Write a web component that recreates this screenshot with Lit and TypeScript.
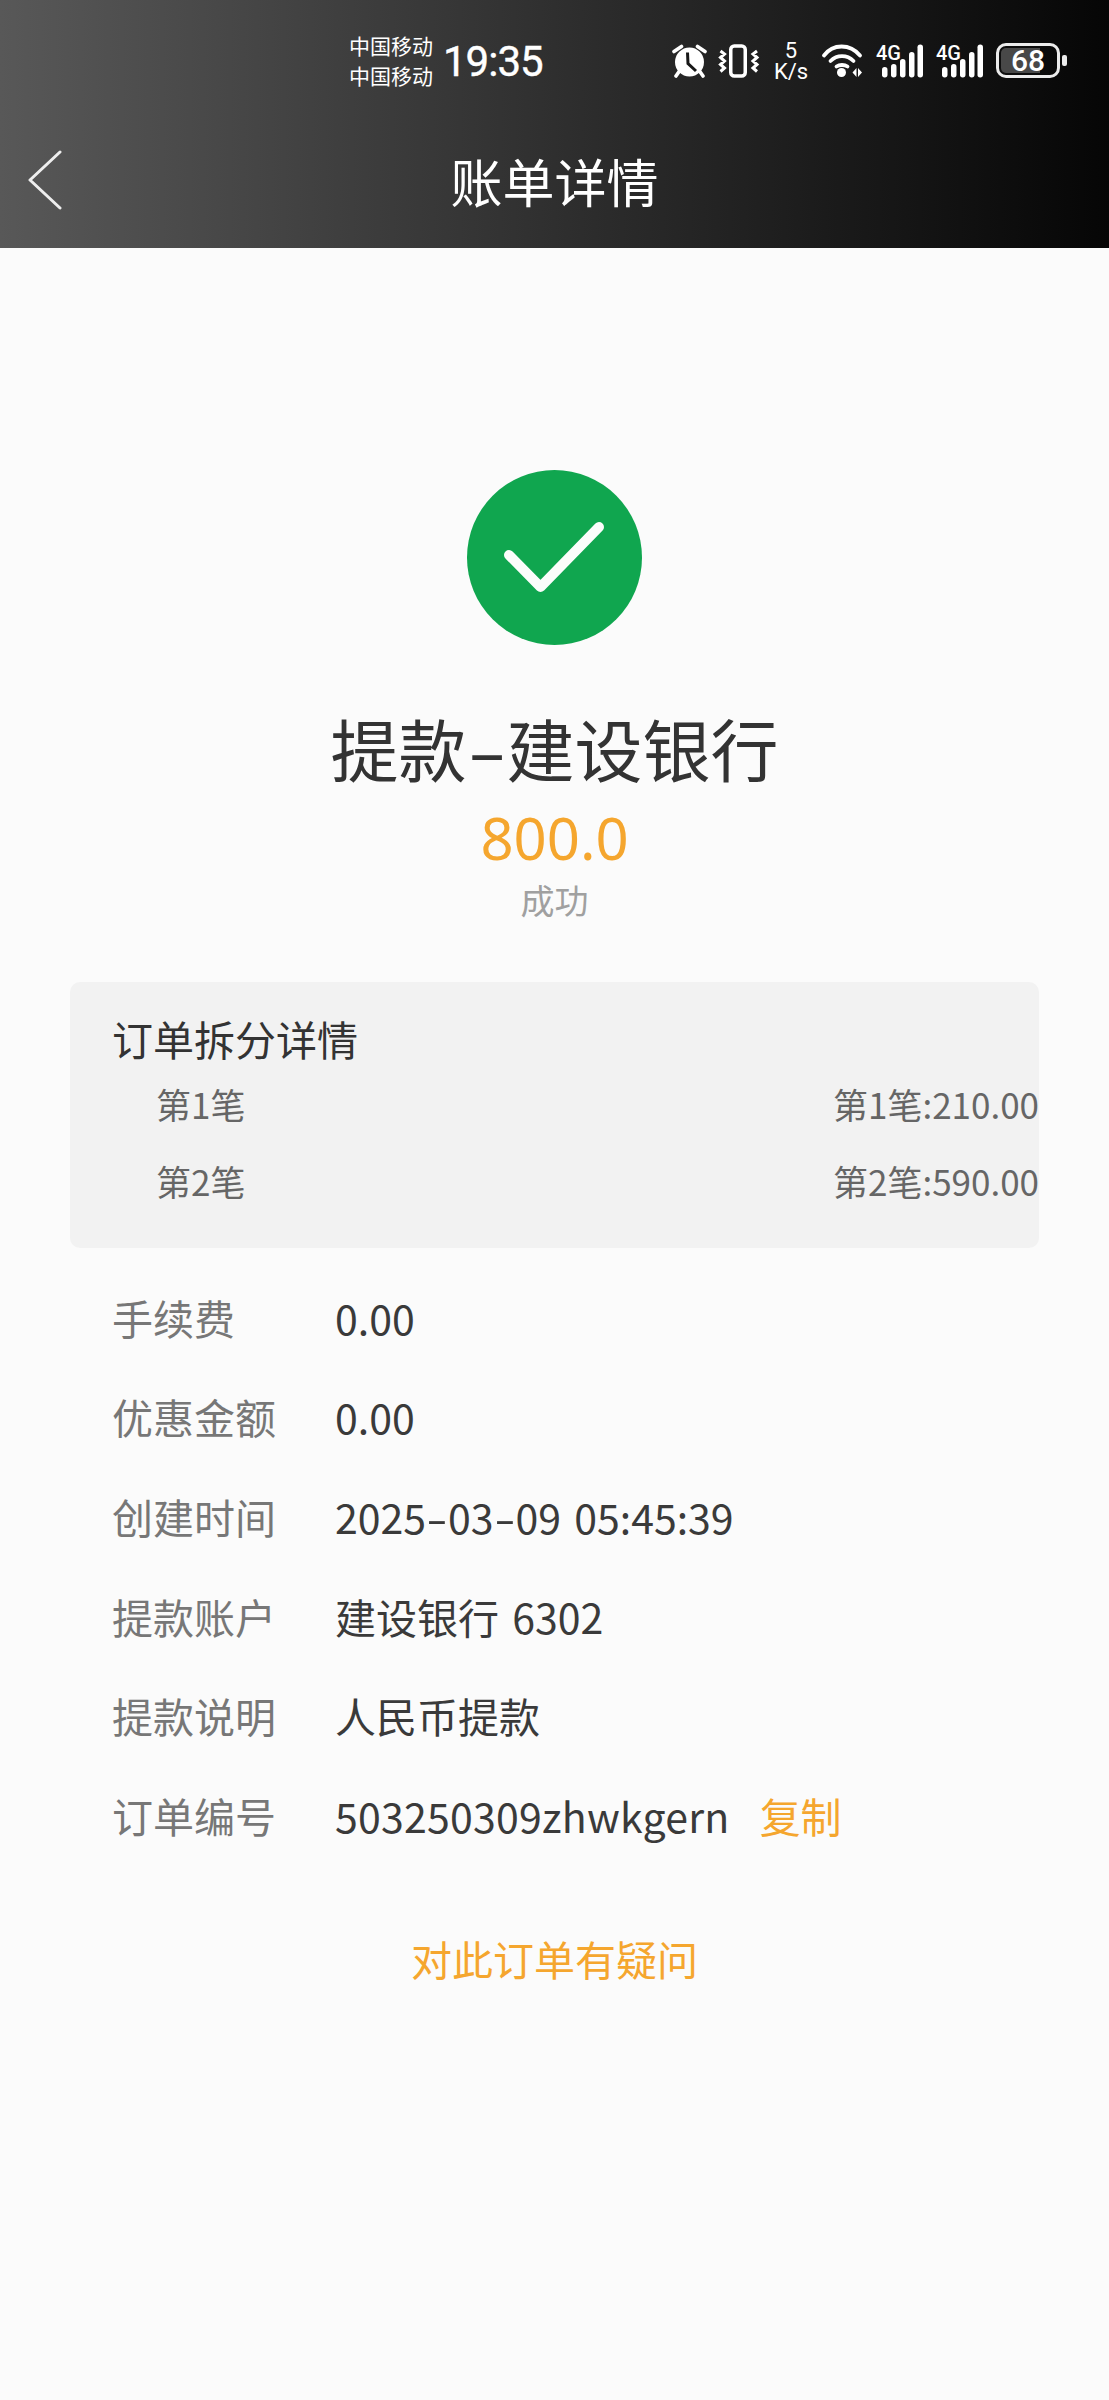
import { LitElement, css, html, svg } from "lit";
import { customElement } from "lit/decorators.js";

const signalBars = svg`<svg width="47" height="34" viewBox="0 0 47 34">
  <g fill="#fff">
    <rect x="6" y="23" width="5.500" height="10.500" rx="2.700"/>
    <rect x="15" y="20" width="5.500" height="13.500" rx="2.700"/>
    <rect x="24" y="15" width="5.500" height="18.500" rx="2.700"/>
    <rect x="33" y="8" width="5.500" height="25.500" rx="2.700"/>
    <rect x="41.500" y="0.500" width="5.500" height="33" rx="2.700"/>
  </g>
</svg>`;

const alarmIcon = svg`<svg width="35" height="34" viewBox="0 0 35 34">
  <circle cx="17.500" cy="18" r="14.500" fill="#fff"/>
  <path d="M9.500 2.500 2 7.500M25.500 2.500l7.500 5" stroke="#fff" stroke-width="3.600" stroke-linecap="round" fill="none"/>
  <path d="M7.500 27l-3.500 5M27.500 27l3.500 5" stroke="#fff" stroke-width="3.600" stroke-linecap="round" fill="none"/>
  <path d="M15.500 8.500l.500 11 8 7.500" stroke="#171717" stroke-width="3" fill="none"/>
</svg>`;

const vibrateIcon = svg`<svg width="42" height="34" viewBox="0 0 42 34">
  <rect x="12.750" y="2" width="14.500" height="30" rx="3.500" fill="none" stroke="#fff" stroke-width="3.500"/>
  <path d="M2.500 7l4 3-4 3.500 4 3.500-4 3.500 4 3.500-4 3.500M39 7l-4 3 4 3.500-4 3.500 4 3.500-4 3.500 4 3.500" fill="none" stroke="#fff" stroke-width="3"/>
</svg>`;

const wifiIcon = svg`<svg width="42" height="34" viewBox="0 0 42 34">
  <g fill="none" stroke="#fff" stroke-width="3.800" stroke-linecap="round">
    <path d="M3 11.500C12 -0.500 29 -0.500 39 11.500"/>
    <path d="M9.500 17C16 10.500 26 10.500 32.500 17"/>
    <path d="M15.500 22.500C18.500 20.500 23.500 20.500 26.500 22.500"/>
  </g>
  <circle cx="20.500" cy="28.500" r="4.500" fill="#fff"/>
  <path d="M31.500 28.500l4-4.500v9zM37 24l4 4.500-4 4.500z" fill="#fff"/>
</svg>`;

// hyphens in this app's font run longer than the CJK font's own glyph
const withDashes = (text: string) =>
  text.split("-").map((part, i) => (i ? html`<span class="dash">-</span>${part}` : part));

@customElement("app-root")
export class AppRoot extends LitElement {
  static styles = css`
    :host {
      display: block;
      min-height: 2400px;
      background: #fbfbfb;
      font-family: "Noto Sans CJK SC", "Noto Sans", sans-serif;
      color: #333;
    }

    .top {
      height: 248px;
      background: linear-gradient(90deg, #585858, #060606);
      color: #fff;
    }

    .status {
      display: flex;
      align-items: center;
      height: 120px;
      padding: 0 42px 0 349px;
    }

    .carriers {
      display: flex;
      flex-direction: column;
      font-size: 21px;
      line-height: 30px;
    }

    .time {
      font-family: Roboto, sans-serif;
      font-size: 42px;
      letter-spacing: -1px;
      -webkit-text-stroke: 0.4px #fff;
      margin-left: 10px;
      margin-top: 3px;
    }

    .icons {
      display: flex;
      align-items: center;
      margin-left: auto;
      margin-top: 1px;
    }

    .icons svg {
      display: block;
    }

    .speed {
      display: flex;
      flex-direction: column;
      align-items: center;
      width: 34px;
      margin: 0 13px 0 14px;
      font-family: Roboto, sans-serif;
      font-size: 22px;
      line-height: 21px;
    }

    .vibrate {
      margin-left: 11px;
    }

    .cell {
      position: relative;
      margin-left: 13px;
    }

    .cell-type {
      position: absolute;
      left: 0;
      top: 1px;
      font-family: Roboto, sans-serif;
      font-size: 20px;
      font-weight: 500;
      line-height: 16px;
    }

    .battery {
      display: flex;
      align-items: center;
      margin-left: 13px;
    }

    .battery-body {
      width: 64px;
      height: 35px;
      box-sizing: border-box;
      border: 3px solid #ececec;
      border-radius: 10px;
      padding: 2px;
    }

    .battery-level {
      height: 100%;
      border-radius: 5px;
      background: linear-gradient(90deg, #484848 72%, transparent 72%);
      font-family: Roboto, sans-serif;
      font-size: 30px;
      font-weight: 500;
      line-height: 25px;
      text-align: center;
    }

    .battery-nub {
      width: 5px;
      height: 11px;
      margin-left: 2px;
      border-radius: 2px;
      background: #ececec;
    }

    .nav {
      display: flex;
      align-items: center;
      justify-content: center;
      position: relative;
      height: 120px;
      font-size: 52px;
    }

    .back {
      position: absolute;
      left: 27px;
      top: 30px;
    }

    .hero {
      display: flex;
      flex-direction: column;
      align-items: center;
      padding-top: 222px;
    }

    .check {
      display: block;
    }

    .name {
      margin-top: 63px;
      font-size: 68px;
      line-height: 80px;
    }

    .name .dash {
      width: 40px;
      transform: scaleX(1.7);
    }

    .dash {
      display: inline-block;
      width: 22px;
      text-align: center;
      transform: scaleX(1.5);
    }

    .amount {
      margin-top: 15px;
      font-family: "Noto Sans", sans-serif;
      font-size: 58px;
      line-height: 70px;
      color: #f5a62e;
    }

    .state {
      margin-top: 5px;
      font-size: 34px;
      line-height: 44px;
      color: #a0a0a0;
    }

    .split {
      margin: 60px 70px 0 70px;
      padding: 31px 0 29px 42px;
      border-radius: 10px;
      background: #f2f2f2;
    }

    .split-title {
      font-size: 41px;
      line-height: 50px;
      margin-bottom: 2px;
    }

    .split-row {
      display: flex;
      align-items: center;
      justify-content: space-between;
      height: 77px;
      padding-left: 44px;
      font-size: 35px;
      color: #666;
    }

    .details {
      margin-top: 19px;
      padding: 0 70px 0 112px;
    }

    .detail {
      display: flex;
      align-items: center;
      height: 99.600px;
      font-size: 41px;
      color: #3a3a3a;
      word-spacing: 4px;
    }

    .label {
      width: 223px;
      flex: none;
      color: #777;
    }

    .order {
      letter-spacing: 0.25px;
    }

    .copy {
      margin-left: 30px;
      color: #f5a62e;
    }

    .question {
      margin-top: 63px;
      font-size: 41px;
      line-height: 60px;
      text-align: center;
      color: #f5a62e;
    }
  `;

  render() {
    const splits = [
      ["第1笔", "第1笔:210.00"],
      ["第2笔", "第2笔:590.00"],
    ];
    const details = [
      ["手续费", "0.00"],
      ["优惠金额", "0.00"],
      ["创建时间", "2025-03-09 05:45:39"],
      ["提款账户", "建设银行 6302"],
      ["提款说明", "人民币提款"],
    ];
    return html`
      <div class="top">
        <div class="status">
          <div class="carriers"><span>中国移动</span><span>中国移动</span></div>
          <div class="time">19:35</div>
          <div class="icons">
            ${alarmIcon}
            <span class="vibrate">${vibrateIcon}</span>
            <div class="speed"><span>5</span><span>K/s</span></div>
            ${wifiIcon}
            <span class="cell"><span class="cell-type">4G</span>${signalBars}</span>
            <span class="cell"><span class="cell-type">4G</span>${signalBars}</span>
            <div class="battery">
              <div class="battery-body"><div class="battery-level">68</div></div>
              <div class="battery-nub"></div>
            </div>
          </div>
        </div>
        <div class="nav">
          <svg class="back" width="36" height="60" viewBox="0 0 36 60">
            <path d="M33 2 3 30l30 28" fill="none" stroke="#eee" stroke-width="3" stroke-linecap="round" stroke-linejoin="round"/>
          </svg>
          账单详情
        </div>
      </div>

      <div class="hero">
        <svg class="check" width="175" height="175" viewBox="0 0 175 175">
          <circle cx="87.500" cy="87.500" r="87.500" fill="#10a64f"/>
          <path d="M42 85l31.500 32 58.500-60" fill="none" stroke="#fbfdfb" stroke-width="10" stroke-linecap="round" stroke-linejoin="round"/>
        </svg>
        <div class="name">${withDashes("提款-建设银行")}</div>
        <div class="amount">800.0</div>
        <div class="state">成功</div>
      </div>

      <div class="split">
        <div class="split-title">订单拆分详情</div>
        ${splits.map(
          ([name, value]) => html`<div class="split-row"><span>${name}</span><span>${value}</span></div>`
        )}
      </div>

      <div class="details">
        ${details.map(
          ([label, value]) =>
            html`<div class="detail"><span class="label">${label}</span><span>${withDashes(value)}</span></div>`
        )}
        <div class="detail">
          <span class="label">订单编号</span><span class="order">503250309zhwkgern</span><span class="copy">复制</span>
        </div>
      </div>

      <div class="question">对此订单有疑问</div>
    `;
  }
}
